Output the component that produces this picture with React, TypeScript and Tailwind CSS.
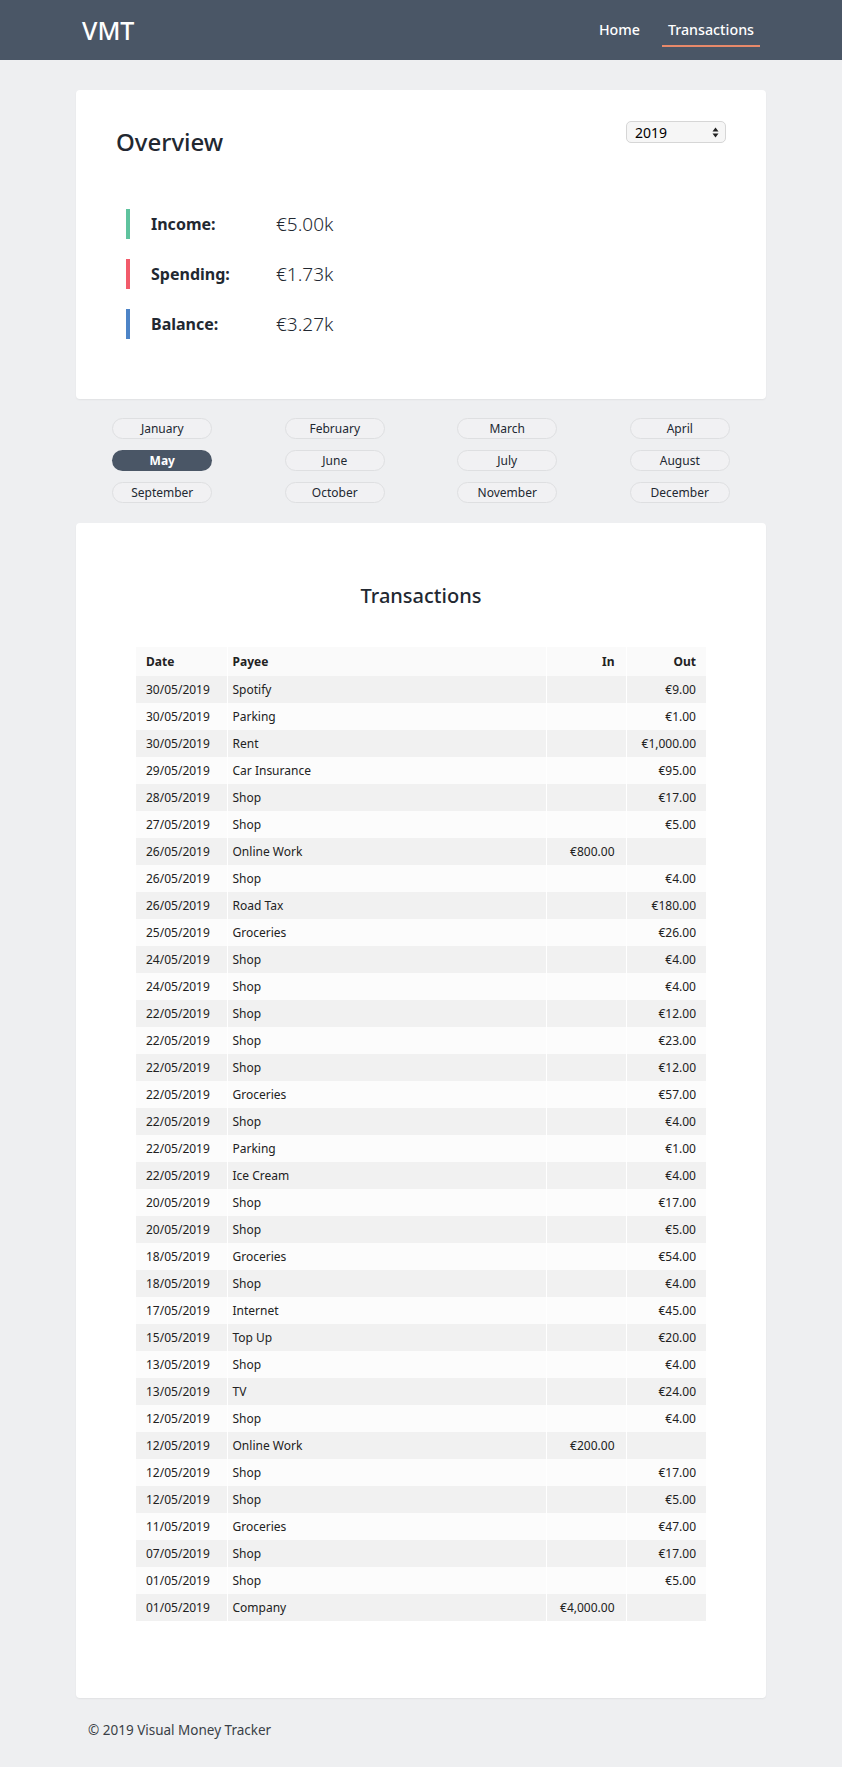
import React from "react";

const rows: [string, string, string, string][] = [
  ["30/05/2019", "Spotify", "", "€9.00"],
  ["30/05/2019", "Parking", "", "€1.00"],
  ["30/05/2019", "Rent", "", "€1,000.00"],
  ["29/05/2019", "Car Insurance", "", "€95.00"],
  ["28/05/2019", "Shop", "", "€17.00"],
  ["27/05/2019", "Shop", "", "€5.00"],
  ["26/05/2019", "Online Work", "€800.00", ""],
  ["26/05/2019", "Shop", "", "€4.00"],
  ["26/05/2019", "Road Tax", "", "€180.00"],
  ["25/05/2019", "Groceries", "", "€26.00"],
  ["24/05/2019", "Shop", "", "€4.00"],
  ["24/05/2019", "Shop", "", "€4.00"],
  ["22/05/2019", "Shop", "", "€12.00"],
  ["22/05/2019", "Shop", "", "€23.00"],
  ["22/05/2019", "Shop", "", "€12.00"],
  ["22/05/2019", "Groceries", "", "€57.00"],
  ["22/05/2019", "Shop", "", "€4.00"],
  ["22/05/2019", "Parking", "", "€1.00"],
  ["22/05/2019", "Ice Cream", "", "€4.00"],
  ["20/05/2019", "Shop", "", "€17.00"],
  ["20/05/2019", "Shop", "", "€5.00"],
  ["18/05/2019", "Groceries", "", "€54.00"],
  ["18/05/2019", "Shop", "", "€4.00"],
  ["17/05/2019", "Internet", "", "€45.00"],
  ["15/05/2019", "Top Up", "", "€20.00"],
  ["13/05/2019", "Shop", "", "€4.00"],
  ["13/05/2019", "TV", "", "€24.00"],
  ["12/05/2019", "Shop", "", "€4.00"],
  ["12/05/2019", "Online Work", "€200.00", ""],
  ["12/05/2019", "Shop", "", "€17.00"],
  ["12/05/2019", "Shop", "", "€5.00"],
  ["11/05/2019", "Groceries", "", "€47.00"],
  ["07/05/2019", "Shop", "", "€17.00"],
  ["01/05/2019", "Shop", "", "€5.00"],
  ["01/05/2019", "Company", "€4,000.00", ""],
];

const months = [
  "January", "February", "March", "April",
  "May", "June", "July", "August",
  "September", "October", "November", "December",
];

const stats = [
  { label: "Income:", value: "€5.00k", bar: "bg-[#5fc39e]" },
  { label: "Spending:", value: "€1.73k", bar: "bg-[#f25b6b]" },
  { label: "Balance:", value: "€3.27k", bar: "bg-[#4d84c7]" },
];

export default function App() {
  return (
    <div className="min-h-screen bg-[#eeeff1] text-[#222831] font-['Noto_Sans',sans-serif]">
      <header className="h-[60px] bg-[#4a5666]">
        <div className="mx-auto flex h-full w-[690px] items-center justify-between px-[6px]">
          <div className="text-[25px] font-medium leading-none text-white">VMT</div>
          <nav className="flex items-center gap-[16px] text-[14.25px] font-medium text-white">
            <span className="px-[6px] pt-[6px] pb-[7px]">Home</span>
            <span className="border-b-2 border-[#e8896a] px-[6px] pt-[6px] pb-[5px]">Transactions</span>
          </nav>
        </div>
      </header>

      <main className="mx-auto w-[690px]">
        <section className="mt-[30px] rounded-[4px] bg-white px-[40px] pt-[31px] pb-[60px] shadow-[0_1px_2px_rgba(0,0,0,0.06)]">
          <div className="flex items-start justify-between">
            <h2 className="mt-[5px] text-[24px] font-medium leading-[32px] text-[#222831]">Overview</h2>
            <div className="flex h-[22px] w-[100px] items-center justify-between rounded-[5px] border border-[#d6d6d6] bg-[#f6f6f6] pl-[8px] pr-[6px] text-[14px] text-black">
              <span>2019</span>
              <svg width="7" height="11" viewBox="0 0 7 11">
                <path d="M3.5 0.5 L6.5 4.5 L0.5 4.5 Z" fill="#222" />
                <path d="M3.5 10.5 L6.5 6.5 L0.5 6.5 Z" fill="#222" />
              </svg>
            </div>
          </div>
          <div className="mt-[51px] ml-[10px] flex flex-col gap-[20px]">
            {stats.map((s) => (
              <div key={s.label} className="flex h-[30px] items-center">
                <div className={`h-[30px] w-[4px] ${s.bar}`} />
                <div className="ml-[21px] w-[125px] text-[16px] font-bold">{s.label}</div>
                <div className="text-[19px] font-light">{s.value}</div>
              </div>
            ))}
          </div>
        </section>

        <div className="mt-[19px] grid grid-cols-4 gap-y-[11px]">
          {months.map((m) => (
            <div key={m} className="flex justify-center">
              <div
                className={
                  m === "May"
                    ? "flex h-[21px] w-[100px] items-center justify-center rounded-full bg-[#4a5666] text-[12px] font-bold text-white"
                    : "flex h-[21px] w-[100px] items-center justify-center rounded-full border border-[#dedfe1] bg-[#f1f1f3] text-[12px] text-[#222831]"
                }
              >
                {m}
              </div>
            </div>
          ))}
        </div>

        <section className="mt-[20px] rounded-[4px] bg-white pt-[59px] pb-[77px] shadow-[0_1px_2px_rgba(0,0,0,0.06)]">
          <h2 className="text-center text-[20px] font-medium leading-[28px]">Transactions</h2>
          <table className="mx-auto mt-[37px] w-[570px] border-collapse text-[12px] text-[#222]">
            <thead>
              <tr className="h-[29px] bg-[#fafafa]">
                <th className="w-[91px] pl-[10px] text-left font-bold">Date</th>
                <th className="border-l border-white pl-[5px] text-left font-bold">Payee</th>
                <th className="w-[80px] border-l border-white pr-[11px] text-right font-bold">In</th>
                <th className="w-[80px] border-l border-white pr-[10px] text-right font-bold">Out</th>
              </tr>
            </thead>
            <tbody>
              {rows.map((r, i) => (
                <tr key={i} className={i % 2 === 0 ? "h-[27px] bg-[#f1f1f1]" : "h-[27px] bg-[#fcfcfc]"}>
                  <td className="pl-[10px]">{r[0]}</td>
                  <td className="border-l border-white pl-[5px]">{r[1]}</td>
                  <td className="border-l border-white pr-[11px] text-right">{r[2]}</td>
                  <td className="border-l border-white pr-[10px] text-right">{r[3]}</td>
                </tr>
              ))}
            </tbody>
          </table>
        </section>

        <footer className="mt-[22px] pb-[26px] pl-[12px] text-[13.5px] leading-[20px] text-[#3a3f47]">
          © 2019 Visual Money Tracker
        </footer>
      </main>
    </div>
  );
}
